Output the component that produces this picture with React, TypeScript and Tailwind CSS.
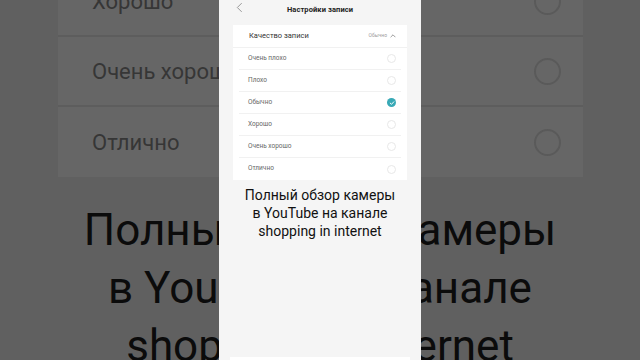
import React from "react";

const options = ["Очень плохо", "Плохо", "Обычно", "Хорошо", "Очень хорошо", "Отлично"];
const bgRows = ["Хорошо", "Очень хорошо", "Отлично"];

const Check = () => (
  <svg viewBox="0 0 10 10" className="w-[6px] h-[6px]" fill="none" stroke="#fff" strokeWidth="1.6" strokeLinecap="round" strokeLinejoin="round">
    <path d="M2 5.2 L4.2 7.2 L8 3" />
  </svg>
);

const App: React.FC = () => {
  return (
    <div
      className="relative w-[640px] h-[360px] overflow-hidden bg-[#606060]"
      style={{ fontFamily: "Roboto, 'Noto Sans', sans-serif" }}
    >
      {/* Blurred, enlarged background copy */}
      <div className="flex flex-col -mt-[33px]">
        <div className="ml-[58px] w-[525px] bg-[#666666]">
          {bgRows.map((label, i) => (
            <div
              key={label}
              className={`flex items-center justify-between h-[70px] pl-[34px] pr-[22px] ${
                i < bgRows.length - 1 ? "border-b-2 border-[#5d5d5d]" : ""
              }`}
            >
              <span className="text-[22px] text-[#363636]">{label}</span>
              <span className="w-[27px] h-[27px] rounded-full border-2 border-[#5a5a5a]" />
            </div>
          ))}
        </div>
        <div className="mt-[24px] text-center text-[44px] leading-[58px] text-[#0b0b0b]">
          Полный обзор камеры
          <br />в YouTube на канале
          <br />shopping in internet
        </div>
      </div>

      {/* Phone screen */}
      <div className="absolute top-0 left-[219px] w-[202px] h-[360px] bg-[#f5f5f5] flex flex-col">
        <div className="relative h-[20px] flex items-center justify-center">
          <svg viewBox="0 0 8 12" className="absolute left-[17px] top-[2px] w-[7px] h-[11px]" fill="none" stroke="#8a8a8a" strokeWidth="1">
            <path d="M6.5 1 L1.5 6 L6.5 11" />
          </svg>
          <span className="text-[7.5px] font-bold text-[#222] tracking-[0.1px]">Настройки записи</span>
        </div>

        <div className="mt-[5px] mx-[14px] bg-white flex flex-col">
          <div className="h-[23px] flex items-center justify-between pl-[16px] pr-[11px] border-b border-[#f1f1f1]">
            <span className="text-[7.5px] text-[#333]">Качество записи</span>
            <span className="flex items-center gap-[3px] text-[5px] text-[#9a9a9a]">
              Обычно
              <svg viewBox="0 0 10 6" className="w-[6px] h-[4px]" fill="none" stroke="#777" strokeWidth="1.2">
                <path d="M1 5 L5 1 L9 5" />
              </svg>
            </span>
          </div>
          {options.map((label, i) => (
            <div key={label} className="mx-[6px]">
              <div
                className={`h-[22px] flex items-center justify-between pl-[9px] pr-[5px] ${
                  i < options.length - 1 ? "border-b border-[#f1f1f1]" : ""
                }`}
              >
                <span className="text-[6.5px] text-[#666]">{label}</span>
                {label === "Обычно" ? (
                  <span className="w-[9px] h-[9px] rounded-full bg-[#38a9b6] flex items-center justify-center">
                    <Check />
                  </span>
                ) : (
                  <span className="w-[9px] h-[9px] rounded-full border border-[#e8e8e8]" />
                )}
              </div>
            </div>
          ))}
        </div>

        <div className="mt-[6px] text-center text-[14px] leading-[18px] text-[#111]">
          Полный обзор камеры
          <br />в YouTube на канале
          <br />shopping in internet
        </div>

        <div className="mt-auto mx-[11px] h-[3px] bg-white" />
      </div>
    </div>
  );
};

export default App;
